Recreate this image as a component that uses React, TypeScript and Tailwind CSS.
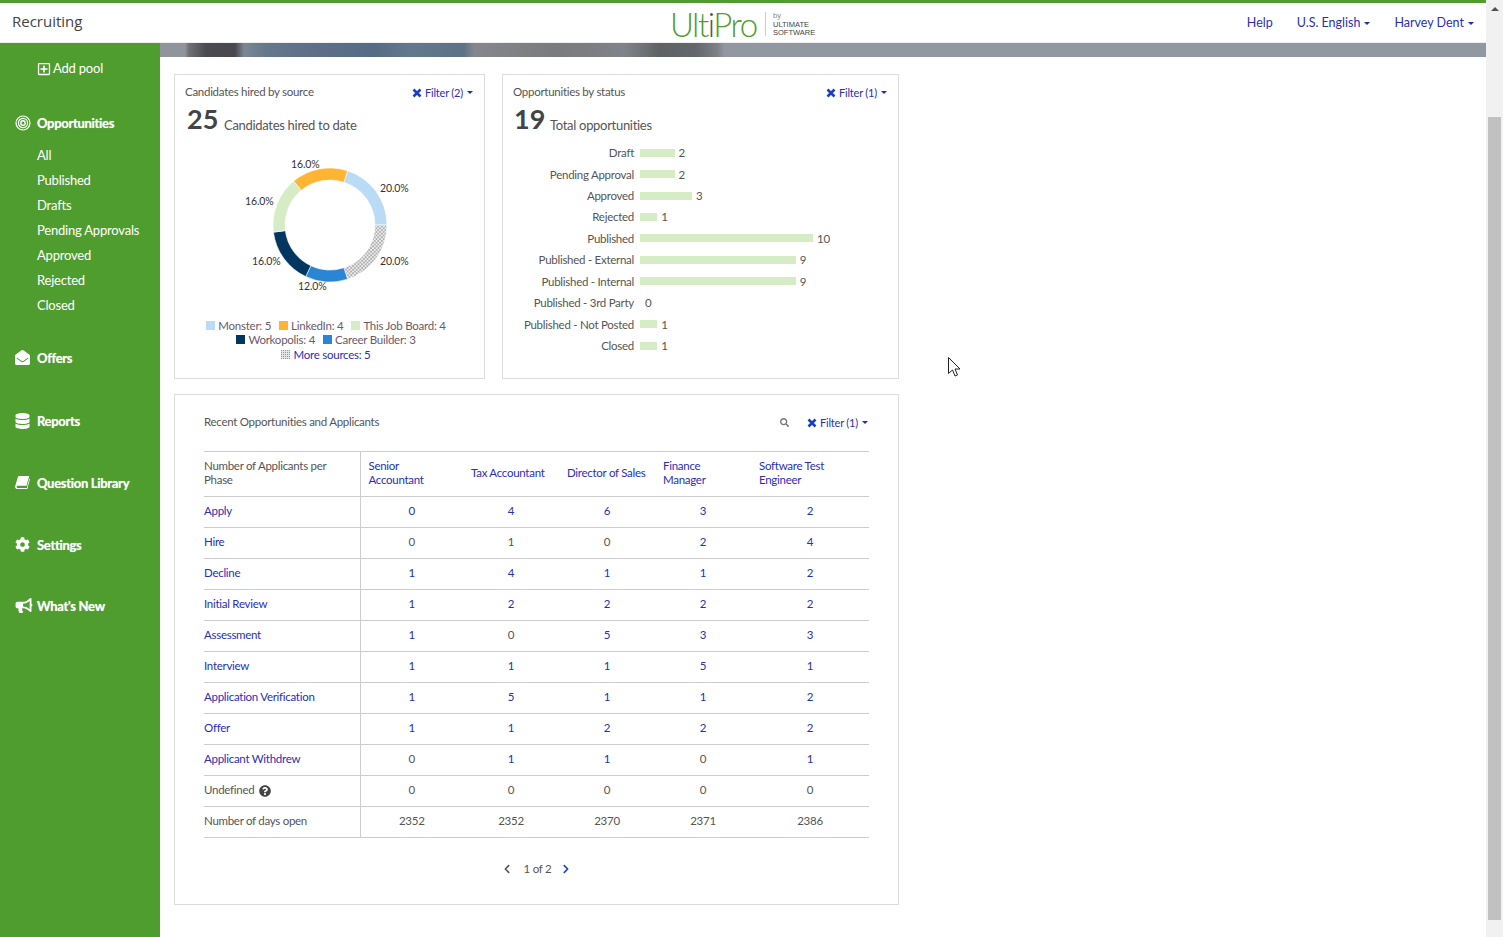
import React from "react";
import { FaEnvelopeOpen, FaDatabase, FaCog, FaBullhorn, FaSearch, FaChevronLeft, FaChevronRight, FaQuestionCircle, FaRegPlusSquare } from "react-icons/fa";

const Caret = () => <span className="inline-block ml-[4px] align-middle w-0 h-0 border-x-[3.5px] border-x-transparent border-t-[3.5px] border-t-[#1a2fb0]" />;

const XIcon = () => (
  <svg width="10" height="10" viewBox="0 0 10 10" className="mr-[3px] block">
    <path d="M1.5 1.5L8.5 8.5M8.5 1.5L1.5 8.5" stroke="#1a3fc0" strokeWidth="2.6" />
  </svg>
);

const Filter = ({ n }: { n: string }) => (
  <span className="flex items-center text-[#2a2fb5] text-[11px] leading-none tracking-[-0.2px] mt-[1px] mr-[1px]">
    <XIcon />
    Filter ({n})
    <Caret />
  </span>
);

const polar = (r: number, a: number) => {
  const t = ((a - 90) * Math.PI) / 180;
  return [57 + r * Math.cos(t), 57 + r * Math.sin(t)];
};
const arc = (a0: number, a1: number) => {
  const [x0, y0] = polar(57, a0);
  const [x1, y1] = polar(57, a1);
  const [x2, y2] = polar(45, a1);
  const [x3, y3] = polar(45, a0);
  return `M${x0} ${y0}A57 57 0 0 1 ${x1} ${y1}L${x2} ${y2}A45 45 0 0 0 ${x3} ${y3}Z`;
};

const DotPattern = ({ id }: { id: string }) => (
  <pattern id={id} width="3.6" height="3.6" patternUnits="userSpaceOnUse">
    <rect width="3.6" height="3.6" fill="#efefef" />
    <circle cx="0.9" cy="0.9" r="0.72" fill="#5c5c5c" />
    <circle cx="2.7" cy="2.7" r="0.72" fill="#5c5c5c" />
  </pattern>
);

const Donut = () => (
  <svg width="114" height="114" viewBox="0 0 114 114" className="block">
    <defs>
      <DotPattern id="dots" />
    </defs>
    {[
      [18, 90, "#b9dbf5"],
      [90, 162, "url(#dots)"],
      [162, 205.2, "#2a85d5"],
      [205.2, 262.8, "#00365f"],
      [262.8, 320.4, "#d5ecc5"],
      [320.4, 378, "#ffb531"],
    ].map(([a, b, c]) => (
      <path key={String(a)} d={arc(a as number, b as number)} fill={c as string} stroke="#fff" strokeWidth="0.6" />
    ))}
  </svg>
);

const Pct = ({ t, cls }: { t: string; cls: string }) => (
  <span className={`absolute text-[10.5px] leading-none text-[#333] tracking-[-0.1px] ${cls}`}>{t}</span>
);

const Leg = ({ c, t, link }: { c: string; t: string; link?: boolean }) => (
  <span className="inline-flex items-center mx-[4px]">
    {c === "dots" ? (
      <svg width="9" height="9" className="mr-[3px]">
        <defs>
          <pattern id="legdots" width="2" height="2" patternUnits="userSpaceOnUse">
            <rect width="2" height="2" fill="#e4e4e4" />
            <rect width="1" height="1" fill="#999" />
          </pattern>
        </defs>
        <rect width="9" height="9" fill="url(#legdots)" />
      </svg>
    ) : (
      <span className={`w-[9px] h-[9px] mr-[3px] ${c}`} />
    )}
    <span className={link ? "text-[#2a2fb5]" : "text-[#6b5a6a]"}>{t}</span>
  </span>
);

const bars: [string, number][] = [
  ["Draft", 2],
  ["Pending Approval", 2],
  ["Approved", 3],
  ["Rejected", 1],
  ["Published", 10],
  ["Published - External", 9],
  ["Published - Internal", 9],
  ["Published - 3rd Party", 0],
  ["Published - Not Posted", 1],
  ["Closed", 1],
];

const cols = ["Senior Accountant", "Tax Accountant", "Director of Sales", "Finance Manager", "Software Test Engineer"];
const rows: [string, (number | string)[], boolean[]][] = [
  ["Apply", [0, 4, 6, 3, 2], [true, true, true, true, true]],
  ["Hire", [0, 1, 0, 2, 4], [false, false, false, true, true]],
  ["Decline", [1, 4, 1, 1, 2], [true, true, true, true, true]],
  ["Initial Review", [1, 2, 2, 2, 2], [true, true, true, true, true]],
  ["Assessment", [1, 0, 5, 3, 3], [true, false, true, true, true]],
  ["Interview", [1, 1, 1, 5, 1], [true, true, true, true, true]],
  ["Application Verification", [1, 5, 1, 1, 2], [true, true, true, true, true]],
  ["Offer", [1, 1, 2, 2, 2], [true, true, true, true, true]],
  ["Applicant Withdrew", [0, 1, 1, 0, 1], [false, true, true, false, true]],
];

const subs = ["All", "Published", "Drafts", "Pending Approvals", "Approved", "Rejected", "Closed"];

const TargetIcon = () => (
  <svg width="16" height="16" viewBox="0 0 16 16" fill="none" stroke="#fff" className="block">
    <circle cx="8" cy="8" r="7" strokeWidth="1.2" />
    <circle cx="8" cy="8" r="4.6" strokeWidth="1.2" />
    <circle cx="8" cy="8" r="2.2" strokeWidth="1.4" />
  </svg>
);

const BookIcon = () => (
  <svg width="15" height="15" viewBox="0 0 16 16" fill="#fff" className="block">
    <path d="M4.5 1H15.2L12.3 11.5H3C1.8 11.5 1.2 13.8 2.6 13.8H12.6L15.2 4H16L13.2 15H2.2C0.5 15 -0.3 13.2 0.3 11.5L3 2.5C3.2 1.6 3.8 1 4.5 1Z" />
  </svg>
);

const NavItem = ({ icon, label, cls }: { icon: React.ReactNode; label: string; cls: string }) => (
  <div className={`flex items-center pl-[15px] h-[20px] text-white font-bold text-[13px] tracking-[-0.3px] [text-shadow:0_0_1px_rgba(255,255,255,0.6)] ${cls}`}>
    <span className="w-[22px] flex items-center mt-[-3px]">{icon}</span>
    {label}
  </div>
);

export default function App() {
  return (
    <div className="w-[1503px] h-[937px] overflow-hidden flex bg-white text-[#555] font-['Lato','Open_Sans',sans-serif] text-[11.5px]">
      <div className="w-[1486px] flex flex-col">
        <header className="h-[43px] shrink-0 border-t-[3px] border-[#4f9c2f] flex items-center justify-between bg-white border-b border-b-[#eee]">
          <div className="w-[600px] pl-[12px] text-[15px] text-[#444] font-['Open_Sans',sans-serif] mt-[-2px]">Recruiting</div>
          <div className="flex items-center absolute left-[670px] top-[9px]">
            <span className="text-[#4f9c2f] font-['Lato',sans-serif] font-light text-[33px] leading-[30px] tracking-[-1.5px] w-[95px]">
              Ult<span className="text-[#555]">i</span>Pro
            </span>
            <span className="w-px h-[24px] bg-[#ccc] mr-[7px]" />
            <span className="flex flex-col text-[7.5px] leading-[8.5px] text-[#444] font-['Liberation_Sans',sans-serif] mt-[2px]">
              <span className="text-[#888]">by</span>
              <span>ULTIMATE</span>
              <span>SOFTWARE</span>
            </span>
          </div>
          <nav className="flex items-center gap-[24px] pr-[12px] text-[#2a2fb5] text-[12.5px] mt-[1px]">
            <span>Help</span>
            <span className="flex items-center">U.S. English<Caret /></span>
            <span className="flex items-center">Harvey Dent<Caret /></span>
          </nav>
        </header>
        <div className="flex flex-1 min-h-0">
          <aside className="w-[160px] shrink-0 bg-[#4f9c2f] text-white text-[13px] tracking-[-0.2px]">
            <div className="flex items-center pl-[37px] h-[20px] mt-[16px]">
              <FaRegPlusSquare className="w-[14px] h-[14px] mr-[2px]" />Add pool
            </div>
            <NavItem icon={<TargetIcon />} label="Opportunities" cls="mt-[35px]" />
            <div className="mt-[9px] pl-[37px] flex flex-col">
              {subs.map((s) => (
                <div key={s} className="h-[25px] leading-[25px]">{s}</div>
              ))}
            </div>
            <NavItem icon={<FaEnvelopeOpen className="w-[15px] h-[15px]" />} label="Offers" cls="mt-[31px]" />
            <NavItem icon={<FaDatabase className="w-[15px] h-[16px]" />} label="Reports" cls="mt-[43px]" />
            <NavItem icon={<BookIcon />} label="Question Library" cls="mt-[42px]" />
            <NavItem icon={<FaCog className="w-[15px] h-[15px]" />} label="Settings" cls="mt-[42px]" />
            <NavItem icon={<FaBullhorn className="w-[18px] h-[15px]" />} label="What's New" cls="mt-[41px]" />
          </aside>
          <main className="flex-1 min-w-0">
            <div className="h-[14px] bg-[linear-gradient(90deg,#8f949d_0,#8f949d_25px,#6f6f76_29px,#4a4a50_46px,#48484e_75px,#7b8795_84px,#64778b_107px,#5e7088_150px,#556b85_214px,#64788c_250px,#5e7285_304px,#85878e_314px,#7a7b7e_393px,#7d7e82_436px,#80838c_464px,#5f6264_500px,#63676b_536px,#7d8088_557px,#9298a2_565px,#9298a2_100%)]" />
            <div className="pl-[14px] pt-[17px] w-[739px]">
              <div className="flex gap-[17px]">
                <section className="w-[311px] h-[305px] border border-[#dcdcdc] px-[10px] pt-[10px]">
                  <div className="flex justify-between items-center h-[14px]">
                    <span className="tracking-[-0.28px]">Candidates hired by source</span>
                    <Filter n="2" />
                  </div>
                  <div className="flex items-baseline mt-[5px] pl-[2px] h-[30px]">
                    <span className="text-[27px] font-bold text-[#444] leading-[30px] w-[37px]">25</span>
                    <span className="text-[13px] tracking-[-0.3px] relative top-[1px]">Candidates hired to date</span>
                  </div>
                  <div className="relative w-[114px] h-[114px] ml-[88px] mt-[34px]">
                    <Donut />
                    <Pct t="16.0%" cls="left-[18px] top-[-9px]" />
                    <Pct t="20.0%" cls="left-[107px] top-[15px]" />
                    <Pct t="16.0%" cls="left-[-28px] top-[28px]" />
                    <Pct t="20.0%" cls="left-[107px] top-[88px]" />
                    <Pct t="16.0%" cls="left-[-21px] top-[88px]" />
                    <Pct t="12.0%" cls="left-[25px] top-[113px]" />
                  </div>
                  <div className="mt-[36px] pr-[7px] text-[11.5px] tracking-[-0.25px]">
                    <div className="flex justify-center h-[14.5px] items-center"><Leg c="bg-[#b9dbf5]" t="Monster: 5" /><Leg c="bg-[#ffb531]" t="LinkedIn: 4" /><Leg c="bg-[#d5ecc5]" t="This Job Board: 4" /></div>
                    <div className="flex justify-center h-[14.5px] items-center"><Leg c="bg-[#00365f]" t="Workopolis: 4" /><Leg c="bg-[#2a85d5]" t="Career Builder: 3" /></div>
                    <div className="flex justify-center h-[14.5px] items-center"><Leg c="dots" t="More sources: 5" link /></div>
                  </div>
                </section>
                <section className="w-[397px] h-[305px] border border-[#dcdcdc] px-[10px] pt-[10px]">
                  <div className="flex justify-between items-center h-[14px]">
                    <span className="tracking-[-0.28px]">Opportunities by status</span>
                    <Filter n="1" />
                  </div>
                  <div className="flex items-baseline mt-[5px] pl-[1px] h-[30px]">
                    <span className="text-[27px] font-bold text-[#444] leading-[30px] w-[36px]">19</span>
                    <span className="text-[13px] tracking-[-0.3px] relative top-[1px]">Total opportunities</span>
                  </div>
                  <div className="mt-[8px] flex flex-col tracking-[-0.27px]">
                    {bars.map(([l, v]) => (
                      <div key={l} className="flex items-center h-[21.45px]">
                        <span className="w-[121px] text-right mr-[6px] shrink-0">{l}</span>
                        <span className="h-[8px] bg-[#d5ecc5]" style={{ width: v * 17.3 }} />
                        <span className={v === 0 ? "ml-[5px]" : "ml-[4px]"}>{v}</span>
                      </div>
                    ))}
                  </div>
                </section>
              </div>
              <section className="mt-[15px] h-[511px] border border-[#dcdcdc] px-[29px] pt-[20px]">
                <div className="flex justify-between items-center h-[14px]">
                  <span className="tracking-[-0.28px]">Recent Opportunities and Applicants</span>
                  <span className="flex items-center">
                    <FaSearch className="w-[9px] h-[9px] text-[#777] mr-[18px] ml-[1px]" />
                    <Filter n="1" />
                  </span>
                </div>
                <table className="mt-[22px] w-[665px] border-collapse table-fixed text-[11.5px] tracking-[-0.28px]">
                  <colgroup>
                    <col className="w-[156px]" /><col className="w-[103px]" /><col className="w-[96px]" /><col className="w-[96px]" /><col className="w-[96px]" /><col className="w-[118px]" />
                  </colgroup>
                  <thead>
                    <tr className="h-[45px] border-y border-[#ccc]">
                      <th className="font-normal text-left border-r border-[#ccc] pr-[20px] pb-[2px] leading-[14px]">Number of Applicants per Phase</th>
                      {cols.map((c, i) => (
                        <th key={c} className={`font-normal text-left text-[#2a2fb5] leading-[14px] pb-[2px] pl-[8px] ${i === 1 || i === 2 ? "pr-0 whitespace-nowrap" : "pr-[30px]"}`}>{c}</th>
                      ))}
                    </tr>
                  </thead>
                  <tbody>
                    {rows.map(([l, vals, links]) => (
                      <tr key={l} className="h-[31px] border-b border-[#ccc]">
                        <td className="text-[#2a2fb5] border-r border-[#ccc] pb-[2px]">{l}</td>
                        {vals.map((v, i) => (
                          <td key={i} className={`text-center pb-[2px] ${links[i] ? "text-[#2a2fb5]" : "text-[#555]"}`}>{v}</td>
                        ))}
                      </tr>
                    ))}
                    <tr className="h-[31px] border-b border-[#ccc]">
                      <td className="border-r border-[#ccc] pb-[2px]"><span className="flex items-center">Undefined<FaQuestionCircle className="w-[12px] h-[12px] ml-[5px] mt-[1px] text-[#444]" /></span></td>
                      {[0, 0, 0, 0, 0].map((v, i) => <td key={i} className="text-center pb-[2px]">{v}</td>)}
                    </tr>
                    <tr className="h-[31px] border-b border-[#ccc]">
                      <td className="border-r border-[#ccc] pb-[2px]">Number of days open</td>
                      {[2352, 2352, 2370, 2371, 2386].map((v, i) => <td key={i} className="text-center pb-[2px]">{v}</td>)}
                    </tr>
                  </tbody>
                </table>
                <div className="mt-[24px] flex items-center justify-center h-[14px] tracking-[-0.25px]">
                  <FaChevronLeft className="w-[8px] h-[10px] text-[#555] mr-[13px]" />
                  <span>1 of 2</span>
                  <FaChevronRight className="w-[8px] h-[10px] text-[#1a3fc0] ml-[11px]" />
                </div>
              </section>
            </div>
          </main>
        </div>
      </div>
      <div className="w-[17px] bg-[#f1f1f1] flex flex-col items-center relative shrink-0">
        <span className="mt-[7px] w-0 h-0 border-x-[4px] border-x-transparent border-b-[4px] border-b-[#505050]" />
        <div className="absolute left-[2px] right-[2px] top-[117px] bottom-[17px] bg-[#c1c1c1]" />
      </div>
      <svg width="14" height="22" viewBox="0 0 14 22" className="absolute left-[948px] top-[357px]">
        <path d="M0.5 0.5V16.5L4.5 13L7 19L9.5 18L7 12H12Z" fill="#fff" stroke="#222" strokeWidth="1" />
      </svg>
    </div>
  );
}
